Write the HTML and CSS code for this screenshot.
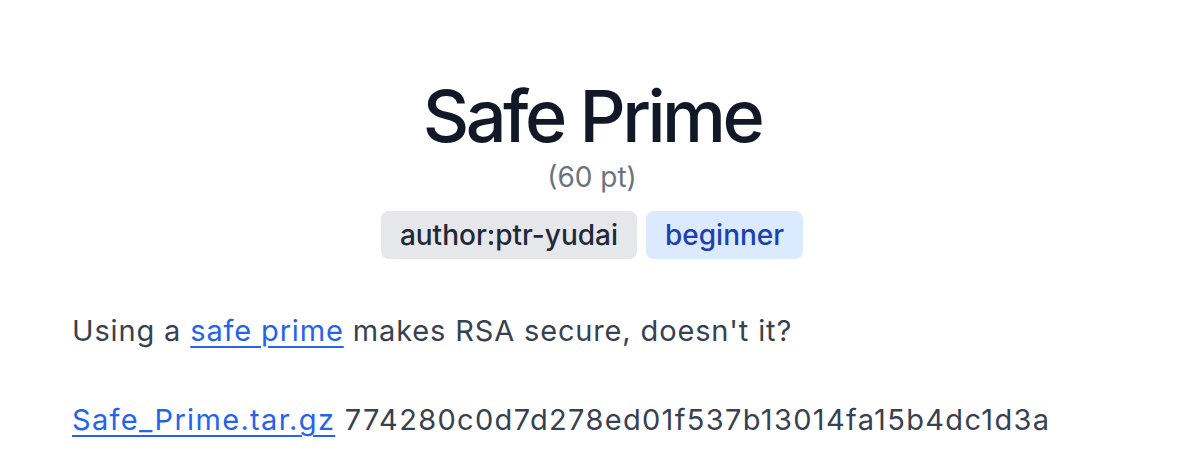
FILE: index.html
```html
<!DOCTYPE html>
<html>
<head>
<meta charset="utf-8">
<link rel="stylesheet" href="styles.css">
</head>
<body>
<main class="page">
  <header class="head">
    <h1 class="title">Safe Prime</h1>
    <div class="points">(60 pt)</div>
    <div class="tags">
      <span class="tag tag-gray">author:ptr-yudai</span>
      <span class="tag tag-blue">beginner</span>
    </div>
  </header>
  <div class="desc">
    <p class="line">Using a <a href="#">safe prime</a> makes RSA secure, doesn't it?</p>
    <p class="line files"><a href="#">Safe_Prime.tar.gz</a> 774280c0d7d278ed01f537b13014fa15b4dc1d3a</p>
  </div>
</main>
</body>
</html>
```
FILE: styles.css
```css
* { box-sizing: border-box; }
html, body { margin: 0; padding: 0; background: #fff; }
body {
  font-family: Inter, "Noto Sans", sans-serif;
  color: #374151;
}
.page {
  width: 1184px;
  padding: 76px 72px 0;
}
.head {
  display: flex;
  flex-direction: column;
  align-items: center;
}
.title {
  margin: 0;
  font-size: 72px;
  line-height: 80px;
  font-weight: 500;
  letter-spacing: -3.5px;
  color: #111827;
}
.points {
  font-size: 28px;
  line-height: 36px;
  color: #6b7280;
  margin-top: 3px;
}
.tags {
  display: flex;
  gap: 9px;
  margin-top: 16px;
}
.tag {
  font-size: 28px;
  line-height: 32px;
  padding: 8px 19px;
  border-radius: 8px;
  font-weight: 500;
}
.tag-gray { background: #e5e7eb; color: #1f2937; }
.tag-blue { background: #dbeafe; color: #1e40af; }
.desc {
  margin-top: 50px;
  font-size: 29px;
  line-height: 44px;
}
.line { margin: 0 0 45px; letter-spacing: 0.85px; }
.files { letter-spacing: 1.33px; }
.desc a {
  color: #2563eb;
  text-decoration: underline;
  text-underline-offset: 5px;
  text-decoration-thickness: 2px;
}
```
